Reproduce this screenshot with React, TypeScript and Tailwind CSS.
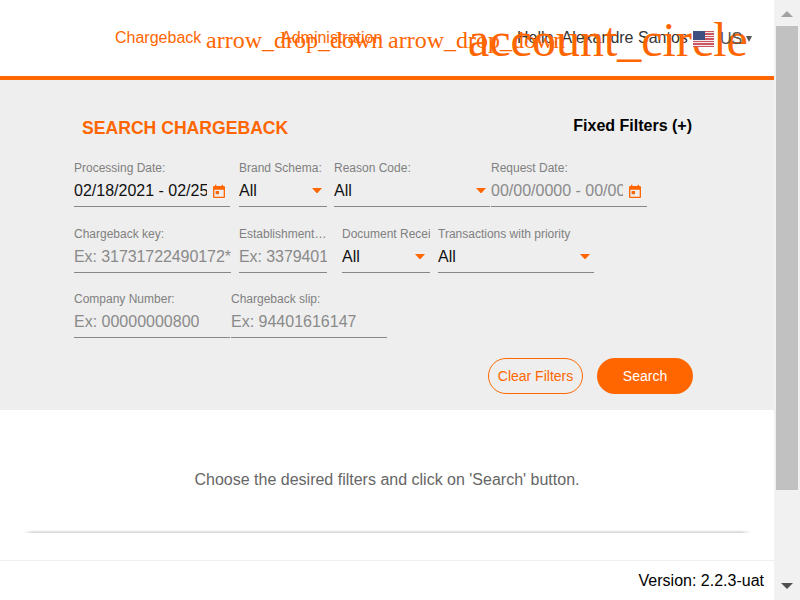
import React from 'react';

const CalendarIcon = () => (
  <svg width="16" height="16" viewBox="0 0 24 24" fill="#ff6600" className="mt-0.5 shrink-0">
    <path d="M19 3h-1V1h-2v2H8V1H6v2H5c-1.11 0-1.99.9-1.99 2L3 19c0 1.1.89 2 2 2h14c1.1 0 2-.9 2-2V5c0-1.1-.9-2-2-2zm0 16H5V8.5h14V19zM7 10.5h5v5H7z" />
  </svg>
);

type FieldProps = {
  label: string;
  value: string;
  width: string;
  kind?: 'text' | 'date' | 'select';
  muted?: boolean;
  ellipsis?: boolean;
  arrowPad?: string;
  valueClass?: string;
};

function Field({
  label,
  value,
  width,
  kind = 'text',
  muted = false,
  ellipsis = false,
  arrowPad = 'pr-[5px]',
  valueClass = '',
}: FieldProps) {
  return (
    <div className={`${width} h-[47px] shrink-0 border-b border-[#888888] flex flex-col`}>
      <div className={`h-4 text-xs leading-4 text-[#808080] whitespace-nowrap overflow-hidden ${ellipsis ? 'text-ellipsis' : ''}`}>{label}</div>
      <div className={`flex h-[30px] items-center ${kind === 'select' ? `justify-between ${arrowPad}` : ''}`}>
        <span className={`text-base leading-6 whitespace-nowrap overflow-hidden ${muted ? 'text-[#8a8a8a]' : 'text-[#111111]'} ${valueClass}`}>
          {value}
        </span>
        {kind === 'date' && <CalendarIcon />}
        {kind === 'select' && (
          <svg width="10" height="5" viewBox="0 0 10 5" fill="#ff6600" className="-mt-px shrink-0">
            <path d="M0 0h10L5.5 5h-1z" />
          </svg>
        )}
      </div>
    </div>
  );
}

const Flag = () => (
  <svg width="21" height="16" viewBox="0 0 21 16" shapeRendering="crispEdges" className="shrink-0">
    <rect width="21" height="16" fill="#f4eaea" />
    {[0, 1, 2, 3, 4, 5, 6].map((i) => (
      <rect key={i} y={i * 2.46} width="21" height="1.23" fill="#cc5560" />
    ))}
    <rect width="12" height="8.6" fill="#3f4f80" />
  </svg>
);

export default function App() {
  return (
    <div className="flex h-[600px] w-[800px] overflow-hidden bg-white font-['Liberation_Sans',Arial,sans-serif]">
      <div className="flex w-[774px] flex-col">
        <header className="flex h-20 shrink-0 items-start border-b-4 border-[#ff6600] pl-[115px] whitespace-nowrap text-[#ff6600]">
          <span className="mt-[26px] w-[91px] text-base leading-6">Chargeback</span>
          <span className="z-10 mt-[26px] w-[75px] font-['Liberation_Serif',serif] text-2xl leading-7">arrow_drop_down</span>
          <span className="mt-[26px] w-[107px] text-base leading-6">Administration</span>
          <span className="z-10 mt-[26px] w-20 font-['Liberation_Serif',serif] text-2xl leading-7">arrow_drop_down</span>
          <span className="z-20 mt-3 w-[49px] font-['Liberation_Serif',serif] text-5xl leading-[56px]">account_circle</span>
          <span className="mt-[26px] w-44 text-base leading-6 text-[#333333]">Hello, Alexandre Santos</span>
          <span className="z-30 mt-[31px] w-[27px]"><Flag /></span>
          <span className="z-30 mt-[27px] w-[26px] text-base leading-6 text-[#555555]">US</span>
          <svg width="6" height="6" viewBox="0 0 6 6" fill="#555555" className="z-30 mt-9">
            <path d="M0 0h6L3 6z" />
          </svg>
        </header>

        <section className="h-[330px] shrink-0 bg-[#eeeeee] pl-[74px]">
          <div className="flex h-20 items-start justify-between pr-[82px] pl-2 font-bold">
            <h1 className="pt-9 text-[17.6px] leading-6 text-[#ff6600]">SEARCH CHARGEBACK</h1>
            <span className="pt-[34px] text-base leading-6 text-black">Fixed Filters (+)</span>
          </div>
          <div className="flex h-[66px]">
            <Field label="Processing Date:" value="02/18/2021 - 02/25/2021" width="w-[156px] mr-[9px]" kind="date" valueClass="w-[133px] mr-1" />
            <Field label="Brand Schema:" value="All" width="w-[88px] mr-[7px]" kind="select" />
            <Field label="Reason Code:" value="All" width="w-[156px] mr-px" kind="select" arrowPad="pr-1" />
            <Field label="Request Date:" value="00/00/0000 - 00/00/0000" width="w-[156px]" kind="date" muted valueClass="w-[132px] mr-1" />
          </div>
          <div className="flex h-[65px]">
            <Field label="Chargeback key:" value="Ex: 31731722490172*" width="w-[157px] mr-2" muted valueClass="tracking-[-0.08px]" />
            <Field label="Establishment Number:" value="Ex: 33794018" width="w-[88px] mr-[15px]" muted ellipsis valueClass="tracking-[-0.08px]" />
            <Field label="Document Receipt:" value="All" width="w-[88px] mr-2" kind="select" />
            <Field label="Transactions with priority" value="All" width="w-[156px]" kind="select" arrowPad="pr-1" />
          </div>
          <div className="flex h-[67px]">
            <Field label="Company Number:" value="Ex: 00000000800" width="w-[156px] mr-px" muted />
            <Field label="Chargeback slip:" value="Ex: 94401616147" width="w-[156px]" muted />
          </div>
          <div className="flex justify-end gap-3.5 pr-[81px]">
            <button className="h-9 w-[95px] rounded-full border border-[#ff6600] text-sm whitespace-nowrap text-[#ff6600]">Clear Filters</button>
            <button className="h-9 w-24 rounded-full bg-[#ff6600] text-sm text-white">Search</button>
          </div>
        </section>

        <main className="flex h-[150px] shrink-0 flex-col">
          <p className="mt-[58px] text-center text-base leading-6 text-[#666666]">Choose the desired filters and click on 'Search' button.</p>
          <div className="mx-6 mt-[38px] h-[3px] bg-linear-to-b from-white to-[#d0d0d0] [mask-image:linear-gradient(to_right,transparent,black_8px,black_calc(100%-8px),transparent)]" />
        </main>
        <footer className="h-10 border-t border-[#f0f0f0] pt-2 pr-2.5 text-right text-base leading-6 text-black">Version: 2.2.3-uat</footer>
      </div>

      <div className="flex w-[26px] flex-col items-center bg-[#f1f1f1]">
        <svg width="12" height="6" viewBox="0 0 12 6" fill="#a3a3a3" className="mt-[11px]">
          <path d="M0 6h12L6 0z" />
        </svg>
        <div className="mt-[9px] h-[464px] w-[22px] bg-[#c1c1c1]" />
        <svg width="12" height="6" viewBox="0 0 12 6" fill="#505050" className="mt-[93px]">
          <path d="M0 0h12L6 6z" />
        </svg>
      </div>
    </div>
  );
}
